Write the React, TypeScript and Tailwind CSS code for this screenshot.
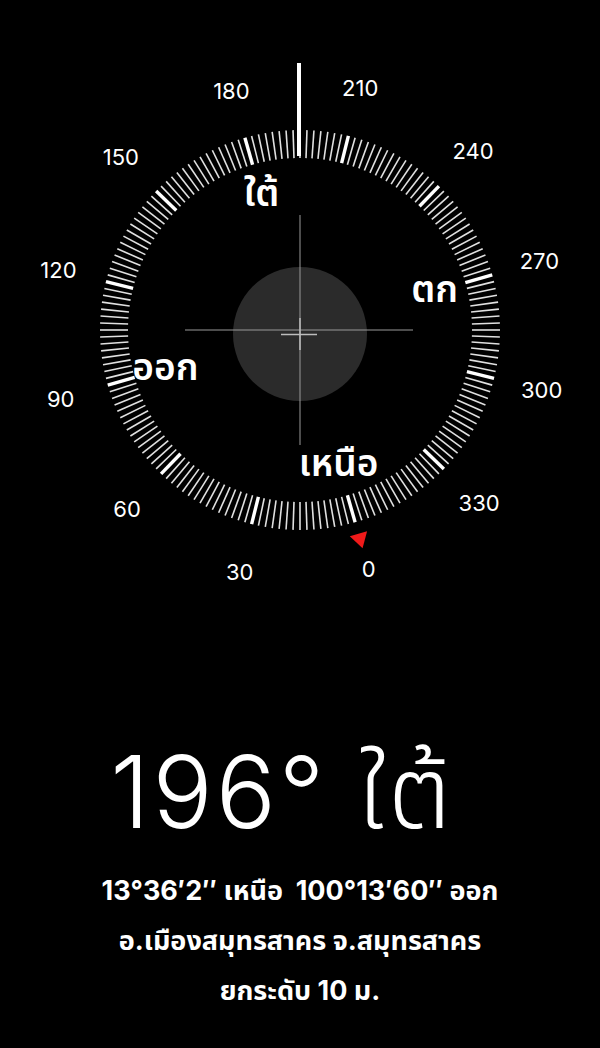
import React from "react";

const CX = 300;
const CY = 330;
const HEADING = 196;

const pos = (deg: number, r: number) => {
  const a = ((deg - HEADING) * Math.PI) / 180;
  return { x: CX + r * Math.sin(a), y: CY - r * Math.cos(a) };
};

const numFont = "Inter, 'Liberation Sans', sans-serif";
const thaiFont = "'Noto Sans Thai', 'Noto Sans', 'DejaVu Sans', sans-serif";

function Dial() {
  const ticks = Array.from({ length: 180 }, (_, i) => i * 2);
  const labels = [0, 30, 60, 90, 120, 150, 180, 210, 240, 270, 300, 330];
  const cardinals: [number, string][] = [
    [0, "เหนือ"],
    [90, "ออก"],
    [180, "ใต้"],
    [270, "ตก"],
  ];
  return (
    <svg width={600} height={620} viewBox="0 0 600 620" className="block">
      {/* level disk */}
      <circle cx={300} cy={334} r={67} fill="#2b2b2b" />
      {/* crosshair */}
      <line x1={185} y1={330} x2={413} y2={330} stroke="#9a9a9a" strokeWidth={1} />
      <line x1={300} y1={215} x2={300} y2={445} stroke="#9a9a9a" strokeWidth={1} />
      <line x1={281} y1={334.5} x2={317} y2={334.5} stroke="#bdbdbd" strokeWidth={1.5} />
      <line x1={300} y1={318} x2={300} y2={350} stroke="#bdbdbd" strokeWidth={1.5} />
      {/* ticks */}
      {ticks.map((d) => {
        const major = d % 30 === 0;
        return (
          <line
            key={d}
            x1={CX}
            y1={CY - 200}
            x2={CX}
            y2={CY - 172}
            stroke="#ffffff"
            strokeOpacity={major ? 1 : 0.88}
            strokeWidth={major ? 3.4 : 1.6}
            transform={`rotate(${d - HEADING} ${CX} ${CY})`}
          />
        );
      })}
      {/* needle */}
      <rect x={297} y={63} width={4} height={93} fill="#ffffff" />
      {/* red north marker */}
      <polygon
        points={`${CX},${CY - 227} ${CX - 9},${CY - 212} ${CX + 9},${CY - 212}`}
        fill="#f01a1a"
        transform={`rotate(${0 - HEADING} ${CX} ${CY})`}
      />
      {/* degree labels */}
      {labels.map((d) => {
        const p = pos(d, 249);
        return (
          <text
            key={d}
            x={p.x}
            y={p.y}
            textAnchor="middle"
            dominantBaseline="central"
            fill="#ffffff"
            fontSize={22}
            fontFamily={numFont}
            fontWeight={400}
          >
            {d}
          </text>
        );
      })}
      {/* cardinal labels */}
      {cardinals.map(([d, t]) => {
        const p = pos(d, 140);
        return (
          <text
            key={d}
            x={p.x}
            y={p.y}
            textAnchor="middle"
            dominantBaseline="central"
            fill="#ffffff"
            fontSize={37}
            fontFamily={thaiFont}
            fontWeight={600}
          >
            {t}
          </text>
        );
      })}
    </svg>
  );
}

export default function App() {
  return (
    <div className="w-[600px] h-[1048px] bg-black flex flex-col items-center overflow-hidden text-white">
      <Dial />
      <div
        className="mt-[122px] pr-[36px] text-[100px] leading-none font-light tracking-[3px] whitespace-nowrap"
        style={{ fontFamily: "Inter, 'Noto Sans Thai', 'Noto Sans', sans-serif" }}
      >
        196° ใต้
      </div>
      <div
        className="mt-[24px] flex flex-col items-center text-[27px] leading-[50px] font-bold whitespace-nowrap"
        style={{ fontFamily: "Inter, 'Noto Sans Thai', 'Noto Sans', sans-serif" }}
      >
        <div>13°36′2″ เหนือ&nbsp;&nbsp;100°13′60″ ออก</div>
        <div>อ.เมืองสมุทรสาคร จ.สมุทรสาคร</div>
        <div>ยกระดับ 10 ม.</div>
      </div>
    </div>
  );
}
